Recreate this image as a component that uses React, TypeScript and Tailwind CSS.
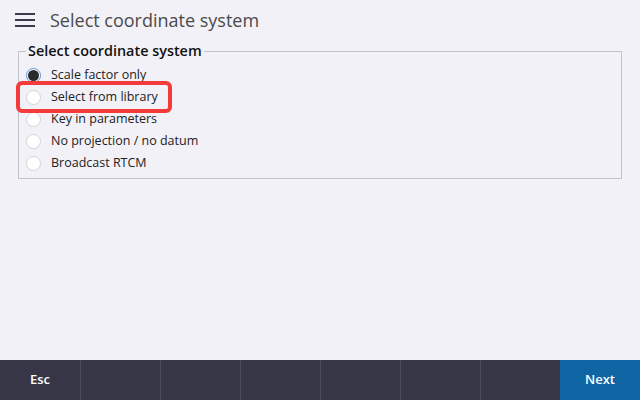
import { useState } from "react"

const options = [
  "Scale factor only",
  "Select from library",
  "Key in parameters",
  "No projection / no datum",
  "Broadcast RTCM",
]

const App = () => {
  const [selected, setSelected] = useState(0)
  return (
    <div
      className="flex h-[400px] w-[640px] flex-col bg-[#f2f1f7] text-[#222]"
      style={{ fontFamily: '"Open Sans", "Noto Sans", sans-serif' }}
    >
      {/* Header */}
      <div className="flex h-[40px] items-center px-[15px]">
        <div className="flex w-[20px] flex-col gap-[4px]">
          <span className="h-[2px] bg-[#3a3a48]" />
          <span className="h-[2px] bg-[#3a3a48]" />
          <span className="h-[2px] bg-[#3a3a48]" />
        </div>
        <h1 className="ml-[15px] text-[18px] text-[#4a4a4a]">
          Select coordinate system
        </h1>
      </div>

      {/* Content */}
      <div className="flex-1 px-[18px] pt-[3px]">
        <fieldset className="relative border border-[#c4c3c9] pb-[4px] pl-[7px] pr-2">
          <legend className="px-[2px] text-[14.4px] font-semibold leading-[16px] text-[#111]">
            Select coordinate system
          </legend>
          <div className="flex flex-col pt-[5px]">
            {options.map((opt, i) => (
              <div
                key={opt}
                onClick={() => setSelected(i)}
                className="flex h-[22px] items-center"
              >
                {selected === i ? (
                  <span className="flex h-[15px] w-[15px] items-center justify-center rounded-full border border-[#5b8fd6] bg-white">
                    <span className="h-[11px] w-[11px] rounded-full bg-[#2a2a2a]" />
                  </span>
                ) : (
                  <span className="h-[15px] w-[15px] rounded-full border border-[#d4d3d8] bg-white" />
                )}
                <span className="ml-[10px] text-[12.5px] text-[#222]">{opt}</span>
              </div>
            ))}
          </div>
          {/* highlight */}
          <div className="pointer-events-none absolute left-[-3px] top-[22px] h-[32px] w-[156px] rounded-[6px] border-[4px] border-[#f43b3b]" />
        </fieldset>
      </div>

      {/* Bottom bar */}
      <div className="grid h-[40px] grid-cols-8 bg-[#373647]">
        <div className="flex items-center justify-center text-[13px] font-semibold text-white">
          Esc
        </div>
        <div className="border-l border-[#4d4c5e]" />
        <div className="border-l border-[#4d4c5e]" />
        <div className="border-l border-[#4d4c5e]" />
        <div className="border-l border-[#4d4c5e]" />
        <div className="border-l border-[#4d4c5e]" />
        <div className="border-l border-[#4d4c5e]" />
        <div className="flex items-center justify-center bg-[#0f65a3] text-[13px] font-semibold text-white">
          Next
        </div>
      </div>
    </div>
  )
}

export default App
